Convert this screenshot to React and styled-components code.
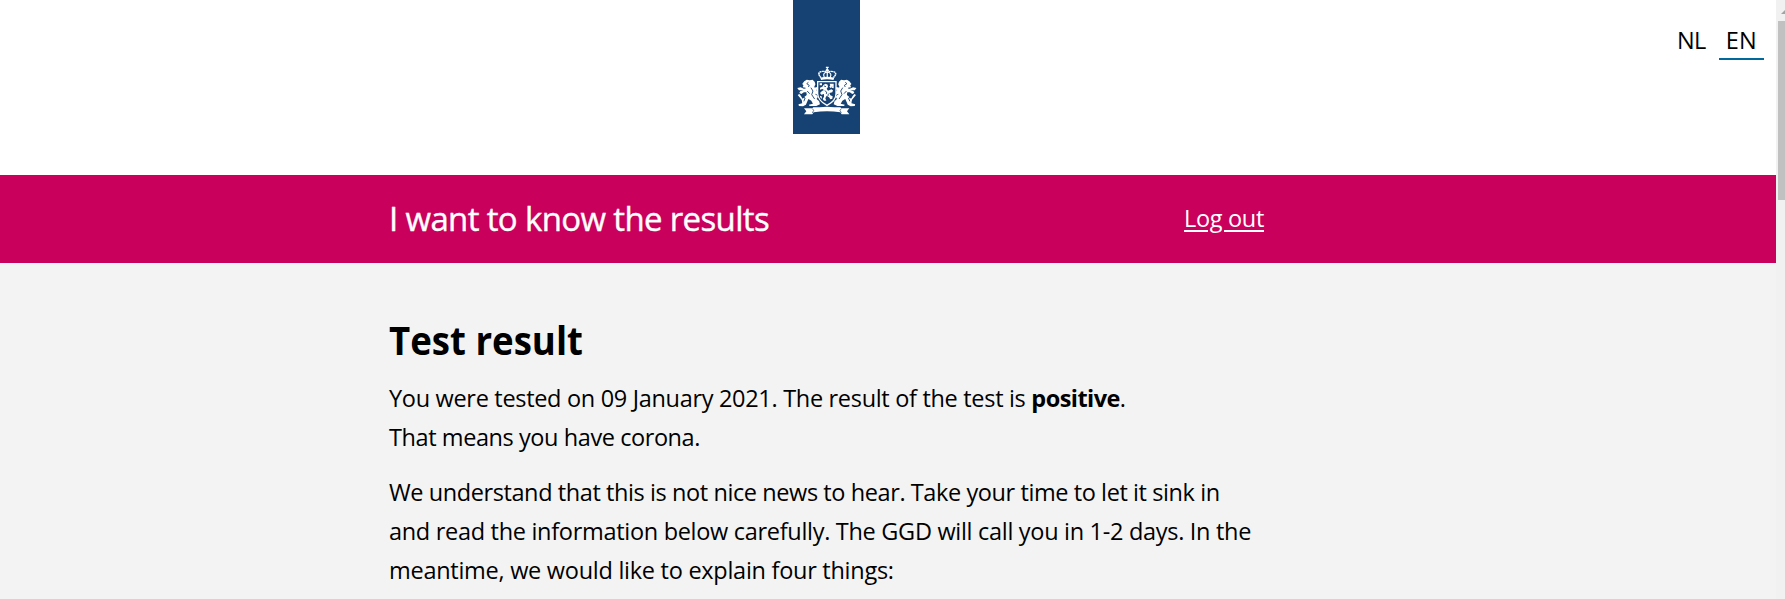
import React from "react";
import styled, { createGlobalStyle } from "styled-components";

const GlobalStyle = createGlobalStyle`
  * { box-sizing: border-box; }
  html, body { margin: 0; height: 100%; overflow: hidden; }
  body {
    background: #f3f3f3;
    color: #000;
    font-family: "Open Sans", "Noto Sans", sans-serif;
    font-size: 23.5px;
    line-height: 39px;
  }
`;

const Window = styled.div`
  display: flex;
  height: 599px;
  overflow: hidden;
`;

const Page = styled.div`
  flex: 1;
  min-width: 0;
`;

const Container = styled.div`
  width: 875px;
  margin-left: 389px;
`;

const Header = styled.header`
  display: flex;
  align-items: flex-start;
  height: 175px;
  padding-right: 12px;
  background: #fff;
`;

const LogoRow = styled(Container)`
  display: flex;
  flex: none;
  justify-content: center;
`;

const Logo = styled.div`
  width: 67px;
  height: 134px;
  background: #154273;

  svg { display: block; width: 67px; height: 134px; }
`;

const Languages = styled.nav`
  display: flex;
  flex: 1;
  justify-content: flex-end;
  gap: 6px;
  padding-top: 21px;
`;

const Language = styled.a`
  height: 39px;
  padding: 0 7px;
  border-bottom: 2px solid ${(p) => (p.$active ? "#01689b" : "transparent")};
  letter-spacing: ${(p) => (p.$active ? "0.2px" : "-0.5px")};
`;

const Banner = styled.div`
  height: 88px;
  background: #ca005d;
  color: #fff;
`;

const BannerRow = styled(Container)`
  display: flex;
  align-items: center;
  justify-content: space-between;
  height: 100%;
  padding-bottom: 2px;
`;

const BannerTitle = styled.div`
  font-size: 33px;
  letter-spacing: -0.65px;
  -webkit-text-stroke: 0.4px #fff;
`;

const LogOut = styled.a`
  letter-spacing: -0.32px;
  text-decoration: underline;
  text-decoration-thickness: 2px;
  text-underline-offset: 3px;
`;

const Content = styled(Container)`
  padding-top: 53px;
`;

const Heading = styled.h1`
  width: max-content;
  margin: 0 0 15px;
  font-size: 40px;
  font-weight: 700;
  line-height: 48px;
  transform: scaleX(0.915);
  transform-origin: left;
`;

const Paragraph = styled.p`
  margin: 0 0 16px;
`;

const Line = styled.span`
  display: block;
  white-space: nowrap;
  letter-spacing: ${(p) => p.$tracking}px;
`;

const Strong = styled.strong`
  letter-spacing: -0.55px;
`;

const ScrollTrack = styled.div`
  display: flex;
  flex-direction: column;
  width: 9px;
  overflow: hidden;
  background: #f1f1f1;

  svg { display: block; flex: none; width: 9px; height: 21px; }
`;

const ScrollThumb = styled.div`
  height: 179px;
  margin-left: 2px;
  background: #c1c1c1;
`;

const Lion = () => (
  <g fill="#fff" transform="translate(-24 0) scale(1.24 1)">
    <path d="M66 79 L72 74 L79 76 L86 74 L91 80 L93 88 L90 96 L94 103 L99 111 L99 120 L93 116 L91 124 L96 132 L102 139 L104 148 L95 153 L79 153 L77 149 L87 146 L83 137 L76 132 L73 140 L70 149 L63 154 L53 153 L52 148 L61 145 L60 135 L66 126 L72 120 L71 112 L65 112 L59 117 L54 114 L56 109 L64 105 L70 104 L69 98 L62 97 L64 91 L61 87 Z" />
    <path d="M49 99 L57 97 L65 101 L76 99 L88 99 L97 96 L101 101 L95 105 L84 106 L72 107 L61 106 L53 106 Z" />
    <path d="M54 126 L50 120 L54 117 L58 123 L61 130 L66 134 L62 138 Z" />
    <path d="M84 122 L88 116 L95 119 L99 125 L96 132 L90 128 Z" />
    <g fill="none" stroke="#154273" strokeWidth="2.4">
      <path d="M76 82 L72 86 L78 91 L76 96" />
      <path d="M82 98 L87 108 L84 119 L91 132" />
      <path d="M61 124 L68 129 L65 139" />
      <path d="M73 108 L79 116" />
    </g>
  </g>
);

const CoatOfArms = () => (
  <svg viewBox="24 -165 201 402" aria-hidden="true">
    {/* supporters */}
    <Lion />
    <g transform="translate(251 0) scale(-1 1)"><Lion /></g>
    {/* crown */}
    <g transform="translate(-25 0) scale(1.2 1)">
      <g fill="#fff">
        <path d="M123 35 H130 V39 H128 V47 H125 V39 H123 Z" />
        <circle cx="126.500" cy="46" r="4" />
        <path d="M109 68 Q126 63 144 68 L142 75 Q126 71 111 75 Z" />
      </g>
      <g fill="none" stroke="#fff" strokeWidth="4">
        <path d="M111 68 Q100 54 111 50 Q120 47 126 52 Q133 47 142 50 Q153 54 142 68" strokeDasharray="5 1" />
        <path d="M119 66 Q114 55 125 51 M134 66 Q139 55 128 51 M126.500 51 V66" strokeWidth="3" />
      </g>
    </g>
    {/* shield */}
    <path d="M98 80 H153 V116 Q153 137 126 151 Q99 137 98 116 Z" fill="#154273" stroke="#fff" strokeWidth="4" />
    <g fill="#fff">
      <path d="M116 89 L122 86 L128 89 L129 96 L125 101 L129 107 L139 103 L144 106 L142 112 L133 114 L136 121 L143 124 L142 131 L136 133 L132 127 L125 122 L121 130 L124 137 L117 137 L113 132 L117 125 L117 117 L109 119 L105 114 L111 108 L117 105 L112 102 L105 104 L105 98 L112 95 Z" />
      <path d="M134 86 H146 V100 L140 98 L142 93 H136 Z" />
      <path d="M104 85 H111 V91 H104 Z M104 122 L110 124 L111 131 L107 129 Z" />
      <path d="M136 99 L133 94 L138 91 L142 96 Z" />
    </g>
    <path d="M117 93 L123 95 M119 107 L125 111 L124 117 M130 116 L129 123" fill="none" stroke="#154273" strokeWidth="2.500" />
    {/* ribbon */}
    <path d="M57 160 H82 L85 157 H104 Q126 153 148 157 H166 L169 160 H193 L186 169 L193 178 H170 L166 172 Q126 166 86 172 L82 178 H57 L64 169 Z" fill="#fff" />
    <path d="M82 161 L86 166 L82 174 M169 161 L165 166 L169 174" fill="none" stroke="#154273" strokeWidth="2" />
  </svg>
);

export default function App() {
  return (
    <>
      <GlobalStyle />
      <Window>
        <Page>
          <Header>
            <LogoRow>
              <Logo><CoatOfArms /></Logo>
            </LogoRow>
            <Languages>
              <Language>NL</Language>
              <Language $active>EN</Language>
            </Languages>
          </Header>
          <Banner>
            <BannerRow>
              <BannerTitle>I want to know the results</BannerTitle>
              <LogOut>Log out</LogOut>
            </BannerRow>
          </Banner>
          <Content>
            <Heading>Test result</Heading>
            <Paragraph>
              <Line $tracking={-0.31}>
                You were tested on 09 January 2021. The result of the test is <Strong>positive</Strong>.
              </Line>
              <Line $tracking={-0.42}>That means you have corona.</Line>
            </Paragraph>
            <Paragraph>
              <Line $tracking={-0.41}>We understand that this is not nice news to hear. Take your time to let it sink in</Line>
              <Line $tracking={-0.3}>and read the information below carefully. The GGD will call you in 1-2 days. In the</Line>
              <Line $tracking={-0.27}>meantime, we would like to explain four things:</Line>
            </Paragraph>
          </Content>
        </Page>
        <ScrollTrack>
          <svg viewBox="0 0 9 21"><path d="M5 14 L9 10 L13 14 Z" fill="#a3a3a3" /></svg>
          <ScrollThumb />
        </ScrollTrack>
      </Window>
    </>
  );
}
